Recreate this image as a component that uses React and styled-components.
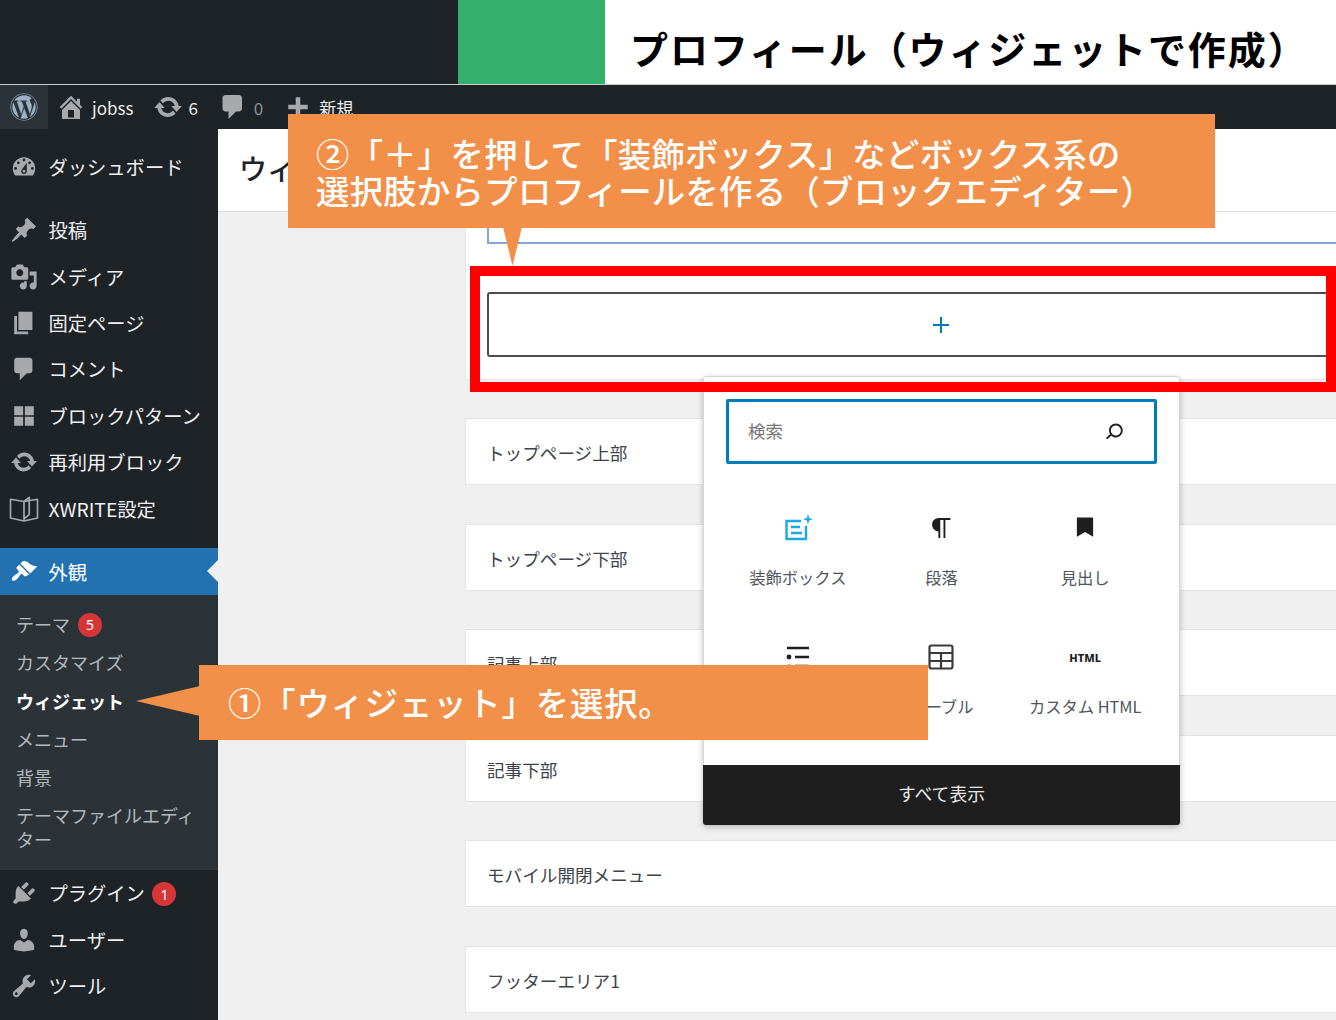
import React from 'react';
import styled, { createGlobalStyle } from 'styled-components';
import { FaWordpress } from 'react-icons/fa';

const FONT = '"Noto Sans CJK JP", "Noto Sans", sans-serif';
const ORANGE = '#f2904a';

const Global = createGlobalStyle`
  html, body { margin: 0; padding: 0; background: #f0f0f1; }
  body { width: 1336px; height: 1020px; overflow: hidden; font-family: ${FONT}; text-spacing-trim: space-all; }
  * { box-sizing: border-box; }
`;

const Page = styled.div`position: relative; width: 1336px; height: 1020px; overflow: hidden; display: flex; flex-direction: column;`;
const Banner = styled.header`height: 85px; display: flex; flex: none; border-bottom: 1px solid #c9cccf; background: #1d2327;`;
const BannerDark = styled.div`width: 458px;`;
const BannerGreen = styled.div`width: 147px; background: #33b16c;`;
const BannerTitle = styled.h1`flex: 1; margin: 0; background: #fff; color: #000; font-size: 38px; font-weight: 700; letter-spacing: 1.9px; line-height: 1; padding: 29px 0 0 25px; white-space: nowrap;`;

const AdminBar = styled.nav`height: 44px; flex: none; display: flex; align-items: center; background: #1d2327; color: #f0f0f1; font-size: 17px;`;
const WpBox = styled.div`width: 48px; height: 44px; background: #2c3338; display: flex; align-items: center; justify-content: center; color: #9bb1c6;`;
const BarItem = styled.div`display: flex; align-items: center; margin-left: ${p => p.$ml}px; gap: ${p => p.$gap}px; color: ${p => p.$dim ? '#8c8f94' : '#f0f0f1'}; white-space: nowrap; line-height: 1;`;
const BarIcon = styled.svg`width: 30px; height: 30px; fill: #a7aaad; flex: none; margin: 0 -3px;`;

const Layout = styled.div`flex: 1; min-height: 0; display: flex;`;
const Sidebar = styled.aside`width: 218px; flex: none; background: #1d2327; padding-top: 15px;`;
const MenuGroup = styled.div`margin-bottom: ${p => p.$mb || 0}px;`;
const MenuItem = styled.div`position: relative; height: 46.4px; display: flex; align-items: center; padding-left: 10px; gap: 10.5px; font-size: 19.3px; color: ${p => p.$active ? '#fff' : '#f0f0f1'}; background: ${p => p.$active ? '#2271b1' : 'transparent'}; white-space: nowrap;
  ${p => p.$active ? `&::after { content: ''; position: absolute; right: 0; top: 12px; border: 11px solid transparent; border-right-color: #f0f0f1; border-left-width: 0; }` : ''}
`;
const MenuIcon = styled.svg`width: 28px; height: 28px; flex: none; fill: ${p => p.$active ? '#fff' : '#a7aaad'};`;
const BookSvg = styled.svg`width: 30px; height: 30px; flex: none; margin: 0 -1px; fill: none; stroke: #a7aaad; stroke-width: 1.1; stroke-linejoin: round;`;
const Badge = styled.span`display: inline-flex; width: 24px; height: 24px; border-radius: 50%; background: #d63638; color: #fff; font-size: 14px; align-items: center; justify-content: center; margin-left: ${p => p.$ml}px; margin-top: 2px; font-family: "Noto Sans", sans-serif;`;
const Submenu = styled.div`background: #2c3338; padding: 10px 0 19.6px;`;
const SubItem = styled.div`display: flex; align-items: center; min-height: 38.4px; padding: ${p => p.$multi ? '6px 20px 0 16px' : '0 0 0 16px'}; font-size: 18px; line-height: 24px; color: ${p => p.$current ? '#fff' : '#b4b9be'}; font-weight: ${p => p.$current ? 700 : 400};`;

const Main = styled.main`flex: 1; min-width: 0; overflow: hidden; background: #f0f0f1;`;
const PageHeader = styled.div`height: 83px; background: #fff; border-bottom: 1px solid #dcdcde; display: flex; align-items: center; padding: 0 0 4px 21px; font-size: 28px; font-weight: 500; color: #1d2327; white-space: nowrap;`;
const Areas = styled.div`width: 952px; margin-left: 247px; display: flex; flex-direction: column; gap: 38px;`;
const OpenPanel = styled.section`background: #fff; border: 1px solid #e4e4e6; border-top: 0; padding: 0 21px 22px;`;
const FocusBox = styled.div`height: 32px; border: 1px solid #82a5dc; border-width: 0 1px 2px 2px;`;
const Appender = styled.div`margin-top: 48px; height: 65px; border: 2px solid #4c4c4c; border-radius: 3px; display: flex; align-items: center; justify-content: center; color: #007cba;`;
const AreaList = styled.div`display: flex; flex-direction: column; gap: 38.6px;`;
const AreaRow = styled.div`height: 67px; background: #fff; border: 1px solid #e4e4e6; display: flex; align-items: center; padding: 2px 0 0 21px; font-size: 17.6px; color: #3c434a;`;

const Popover = styled.div`position: absolute; left: 703px; top: 376px; width: 477px; height: 449px; background: #fff; border: 1px solid #d6d6d6; border-radius: 3px; box-shadow: 0 2px 6px rgba(0,0,0,.25); display: flex; flex-direction: column; padding-top: 22px;`;
const SearchBox = styled.div`margin: 0 22px; height: 65px; border: 3px solid #007cba; border-radius: 2px; display: flex; align-items: center; justify-content: space-between; padding: 0 25px 2px 19px; font-size: 17.5px; color: #757575;`;
const BlockGrid = styled.div`margin: 29px 22px 0; display: grid; grid-template-columns: repeat(3, 1fr); grid-auto-rows: 129px;`;
const BlockCell = styled.div`display: flex; flex-direction: column; align-items: center; padding-top: 20px; font-size: 16.3px; color: #50555a; white-space: nowrap;`;
const BlockIcon = styled.div`height: 30px; display: flex; align-items: center; justify-content: center; margin-bottom: 22px; color: #1e1e1e;`;
const HtmlMark = styled.span`font-family: "Noto Sans", sans-serif; font-size: 11px; font-weight: 800; color: #1e1e1e;`;
const ShowAll = styled.div`margin: auto -1px -1px; height: 60px; padding-bottom: 4px; background: #1e1e1e; color: #e8e8e8; display: flex; align-items: center; justify-content: center; font-size: 17.8px; border-radius: 0 0 3px 3px;`;

const RedFrame = styled.div`position: absolute; left: 470px; top: 266px; width: 866px; height: 126px; border: 10px solid #f00; pointer-events: none;`;
const Callout = styled.div`position: absolute; left: ${p => p.$x}px; top: ${p => p.$y}px; width: ${p => p.$w}px; height: ${p => p.$h}px; background: ${ORANGE}; color: #fff; font-size: 33.3px; font-weight: 500; line-height: 37px; letter-spacing: ${p => p.$ls}px; white-space: nowrap; padding: ${p => p.$pad};`;
const TailLeft = styled.div`position: absolute; left: -63px; top: 21px; width: 64px; height: 30px; background: ${ORANGE}; clip-path: polygon(0 50%, 100% 0, 100% 100%);`;
const TailDown = styled.div`position: absolute; left: 215px; bottom: -38px; width: 19px; height: 39px; background: ${ORANGE}; clip-path: polygon(0 0, 100% 0, 50% 100%);`;

const P = {
  dashboard: 'M3.76 16h12.48c1.1-1.37 1.76-3.11 1.76-5 0-4.42-3.58-8-8-8s-8 3.58-8 8c0 1.89.66 3.63 1.76 5zM10 4c.55 0 1 .45 1 1s-.45 1-1 1-1-.45-1-1 .45-1 1-1zM6 6c.55 0 1 .45 1 1s-.45 1-1 1-1-.45-1-1 .45-1 1-1zm8 0c.55 0 1 .45 1 1s-.45 1-1 1-1-.45-1-1 .45-1 1-1zm-5.37 5.55L12 7v6c0 1.1-.9 2-2 2s-2-.9-2-2c0-.57.24-1.08.63-1.45zM4 10c.55 0 1 .45 1 1s-.45 1-1 1-1-.45-1-1 .45-1 1-1zm12 0c.55 0 1 .45 1 1s-.45 1-1 1-1-.45-1-1 .45-1 1-1zm-5 3c0-.55-.45-1-1-1s-1 .45-1 1 .45 1 1 1 1-.45 1-1z',
  pin: 'M10.44 3.02l1.82-1.82 6.36 6.35-1.83 1.82c-1.05-.68-2.48-.57-3.41.36l-.75.75c-.92.93-1.04 2.35-.35 3.41l-1.83 1.82-2.41-2.41-2.8 2.79c-.42.42-3.38 2.71-3.8 2.29s1.86-3.39 2.28-3.81l2.79-2.79L4.1 9.36l1.83-1.82c1.05.69 2.48.57 3.4-.36l.75-.75c.93-.92 1.05-2.35.36-3.41z',
  media: 'M13 11V4c0-.55-.45-1-1-1h-1.67L9 1H5L3.67 3H2c-.55 0-1 .45-1 1v7c0 .55.45 1 1 1h10c.55 0 1-.45 1-1zM7 4.5c1.38 0 2.5 1.12 2.5 2.5S8.38 9.5 7 9.5 4.5 8.38 4.5 7 5.62 4.5 7 4.5zM14 6h5v10.5c0 1.38-1.12 2.5-2.5 2.5S14 17.88 14 16.5s1.12-2.5 2.5-2.5c.17 0 .34.02.5.05V9h-3V6zm-4 8.05V13h2v3.5c0 1.38-1.12 2.5-2.5 2.5S7 17.88 7 16.5 8.12 14 9.5 14c.17 0 .34.02.5.05z',
  page: 'M6 15V2h10v13H6zm-1 1h8v2H3V5h2v11z',
  comment: 'M5 2h9c1.1 0 2 .9 2 2v7c0 1.1-.9 2-2 2h-2l-5 5v-5H5c-1.1 0-2-.9-2-2V4c0-1.1.9-2 2-2z',
  grid: 'M3 3h6.4v6.4H3zM10.6 3H17v6.4h-6.4zM3 10.6h6.4V17H3zM10.6 10.6H17V17h-6.4z',
  update: 'M10.2 3.28c3.53 0 6.43 2.61 6.92 6h2.08l-3.5 4-3.5-4h2.32c-.45-1.97-2.21-3.45-4.32-3.45-1.45 0-2.73.71-3.54 1.78L4.95 5.66C6.23 4.2 8.11 3.28 10.2 3.28zm-.4 13.44c-3.52 0-6.43-2.61-6.92-6H.8l3.5-4c1.17 1.33 2.33 2.67 3.5 4H5.48c.45 1.97 2.21 3.45 4.32 3.45 1.45 0 2.73-.71 3.54-1.78l1.71 1.95c-1.28 1.46-3.15 2.38-5.25 2.38z',
  brush: 'M14.48 11.06L7.41 3.99l1.5-1.5c.5-.56 2.3-.47 3.51.32 1.21.8 1.43 1.28 2.91 2.1 1.18.64 2.45 1.26 4.45.85zm-.71.71L6.7 4.7 4.93 6.47c-.39.39-.39 1.02 0 1.41l1.06 1.06c.39.39.39 1.03 0 1.42-.6.6-1.43 1.11-2.21 1.69-.35.26-.7.53-1.01.84C1.43 13.71.96 15.12 1.53 15.9c.56.78 2.21.47 3.57-.88.31-.31.58-.66.84-1.01.58-.78 1.09-1.61 1.69-2.21.39-.39 1.02-.39 1.41 0l1.06 1.06c.39.39 1.02.39 1.41 0z',
  plugin: 'M13.11 4.36L9.87 7.6 8 5.73l3.24-3.24c.35-.34 1.05-.2 1.56.32.52.51.66 1.21.31 1.55zm-8 1.77l.91-1.12 9.01 9.01-1.19.84c-.71.71-2.63 1.16-3.82 1.16H6.14L4.9 17.26c-.59.59-1.54.59-2.12 0-.59-.58-.59-1.53 0-2.12l1.24-1.24v-3.88c0-1.13.4-3.19 1.09-3.89zm7.26 3.97l3.24-3.24c.34-.35 1.04-.21 1.55.31.52.51.66 1.21.31 1.55l-3.24 3.25z',
  user: 'M10 9.25c-2.27 0-2.73-3.44-2.73-3.44C7 4.02 7.82 2 9.97 2c2.16 0 2.98 2.02 2.71 3.81 0 0-.41 3.44-2.68 3.44zm0 2.57L12.72 10c2.39 0 4.52 2.33 4.52 4.53v2.49s-3.65 1.13-7.24 1.13c-3.65 0-7.24-1.13-7.24-1.13v-2.49c0-2.25 1.94-4.48 4.47-4.48z',
  tool: 'M16.68 9.77c-1.34 1.34-3.3 1.67-4.95.99l-5.41 6.52c-.99.99-2.59.99-3.58 0s-.99-2.59 0-3.57l6.52-5.42c-.68-1.65-.35-3.61.99-4.95 1.28-1.28 3.12-1.62 4.72-1.06l-2.89 2.89 2.82 2.82 2.86-2.87c.53 1.58.18 3.39-1.08 4.67zM3.81 16.21c.4.39 1.04.39 1.43 0 .4-.4.4-1.04 0-1.43-.39-.4-1.03-.4-1.43 0-.39.39-.39 1.03 0 1.43z',
  home: 'M16 8.5l1.53 1.53-1.06 1.06L10 4.62l-6.47 6.47-1.06-1.06L10 2.5l4 4v-2h2v4zm-6-2.46l6 5.99V18H4v-5.97zM12 17v-5H8v5h4z',
  plus: 'M16.5 8.5v3h-5v5h-3v-5h-5v-3h5v-5h3v5z',
};

const Side = ({ d, active }) => (
  <MenuIcon viewBox="0 0 20 20" $active={active}><path d={d} fillRule="evenodd" /></MenuIcon>
);
const BookIcon = () => (
  <BookSvg viewBox="0 0 20 20">
    <path d="M10 5L1 3.5v12.5l9 2 9-2V3.5L10 5zM10 5v13M10 5l3.5-2.8v11.5L10 16.5" />
  </BookSvg>
);
const Bar = ({ d }) => <BarIcon viewBox="0 0 20 20"><path d={d} fillRule="evenodd" /></BarIcon>;

const areas = ['トップページ上部', 'トップページ下部', '記事上部', '記事下部', 'モバイル開閉メニュー', 'フッターエリア1'];

export default function App() {
  return (
    <Page>
      <Global />
      <Banner>
        <BannerDark />
        <BannerGreen />
        <BannerTitle>プロフィール（ウィジェットで作成）</BannerTitle>
      </Banner>
      <AdminBar>
        <WpBox><FaWordpress size={28} /></WpBox>
        <BarItem $ml={11} $gap={9}><Bar d={P.home} />jobss</BarItem>
        <BarItem $ml={23} $gap={8}><Bar d={P.update} />6</BarItem>
        <BarItem $ml={23} $gap={9} $dim><Bar d={P.comment} />0</BarItem>
        <BarItem $ml={23} $gap={9}><Bar d={P.plus} />新規</BarItem>
      </AdminBar>
      <Layout>
        <Sidebar>
          <MenuGroup $mb={16.6}>
            <MenuItem><Side d={P.dashboard} />ダッシュボード</MenuItem>
          </MenuGroup>
          <MenuGroup $mb={16.6}>
            <MenuItem><Side d={P.pin} />投稿</MenuItem>
            <MenuItem><Side d={P.media} />メディア</MenuItem>
            <MenuItem><Side d={P.page} />固定ページ</MenuItem>
            <MenuItem><Side d={P.comment} />コメント</MenuItem>
            <MenuItem><Side d={P.grid} />ブロックパターン</MenuItem>
            <MenuItem><Side d={P.update} />再利用ブロック</MenuItem>
            <MenuItem><BookIcon />XWRITE設定</MenuItem>
          </MenuGroup>
          <MenuItem $active><Side d={P.brush} active />外観</MenuItem>
          <Submenu>
            <SubItem>テーマ<Badge $ml={8}>5</Badge></SubItem>
            <SubItem>カスタマイズ</SubItem>
            <SubItem $current>ウィジェット</SubItem>
            <SubItem>メニュー</SubItem>
            <SubItem>背景</SubItem>
            <SubItem $multi>テーマファイルエディター</SubItem>
          </Submenu>
          <MenuItem><Side d={P.plugin} />プラグイン<Badge $ml={-3}>1</Badge></MenuItem>
          <MenuItem><Side d={P.user} />ユーザー</MenuItem>
          <MenuItem><Side d={P.tool} />ツール</MenuItem>
        </Sidebar>
        <Main>
          <PageHeader>ウィジェット</PageHeader>
          <Areas>
            <OpenPanel>
              <FocusBox />
              <Appender>
                <svg width="20" height="20" viewBox="0 0 20 20" fill="none" stroke="currentColor" strokeWidth="2"><path d="M10 2v16M2 10h16" /></svg>
              </Appender>
            </OpenPanel>
            <AreaList>
              {areas.map(a => <AreaRow key={a}>{a}</AreaRow>)}
            </AreaList>
          </Areas>
        </Main>
      </Layout>

      <Popover>
        <SearchBox>
          検索
          <svg width="30" height="30" viewBox="0 0 24 24" fill="#1e1e1e"><path d="M13.5 6C10.5 6 8 8.5 8 11.5c0 1.1.3 2.1.9 3l-3.4 3 1 1.1 3.4-2.9c1 .9 2.2 1.4 3.6 1.4 3 0 5.5-2.5 5.5-5.5C19 8.5 16.5 6 13.5 6zm0 9.5c-2.2 0-4-1.8-4-4s1.8-4 4-4 4 1.8 4 4-1.8 4-4 4z" /></svg>
        </SearchBox>
        <BlockGrid>
          <BlockCell>
            <BlockIcon>
              <svg width="30" height="30" viewBox="0 0 30 30" fill="none" stroke="#1aa9e6" strokeWidth="2.4"><path d="M23 13v13H3.5V8H18M8 14h9M8 20h11" /><path d="M25 1l1.2 4 3.8 1.2-3.8 1.2L25 11.5l-1.2-4-3.8-1.2 3.8-1.2z" fill="#1aa9e6" stroke="none" /></svg>
            </BlockIcon>
            装飾ボックス
          </BlockCell>
          <BlockCell>
            <BlockIcon>
              <svg width="30" height="30" viewBox="0 0 24 24" fill="#1e1e1e"><path d="M19.5 4H9.9c-2.9.2-5 2.4-5 5.3s2.1 5 5 5.3V20h1.5V5.5h2.6V20h1.5V5.5h4z" /></svg>
            </BlockIcon>
            段落
          </BlockCell>
          <BlockCell>
            <BlockIcon>
              <svg width="30" height="30" viewBox="0 0 24 24" fill="#1e1e1e"><path d="M5.5 3.5h13v15.5L12 15.2 5.5 19z" /></svg>
            </BlockIcon>
            見出し
          </BlockCell>
          <BlockCell>
            <BlockIcon>
              <svg width="30" height="30" viewBox="0 0 30 30" fill="none" stroke="#1e1e1e" strokeWidth="2.4"><path d="M4 6h22M12 15h14M4 24h4M12 24h14" /><circle cx="6" cy="15" r="2.4" fill="#1e1e1e" stroke="none" /></svg>
            </BlockIcon>
            リスト
          </BlockCell>
          <BlockCell>
            <BlockIcon>
              <svg width="30" height="30" viewBox="0 0 30 30" fill="none" stroke="#3a3a3a" strokeWidth="2.2"><rect x="3.5" y="3.5" width="23" height="23" rx="2" /><path d="M3.5 11h23M3.5 19h23M15 11v15.5" /></svg>
            </BlockIcon>
            テーブル
          </BlockCell>
          <BlockCell>
            <BlockIcon><HtmlMark>HTML</HtmlMark></BlockIcon>
            カスタム HTML
          </BlockCell>
        </BlockGrid>
        <ShowAll>すべて表示</ShowAll>
      </Popover>

      <RedFrame />

      <Callout $x={288} $y={114} $w={927} $h={114} $ls={0.35} $pad="20px 0 0 28px">
        ②「＋」を押して「装飾ボックス」などボックス系の<br />
        選択肢からプロフィールを作る（ブロックエディター）
        <TailDown />
      </Callout>
      <Callout $x={199} $y={665} $w={729} $h={75} $ls={0.9} $pad="18px 0 0 29px">
        ①「ウィジェット」を選択。
        <TailLeft />
      </Callout>
    </Page>
  );
}
